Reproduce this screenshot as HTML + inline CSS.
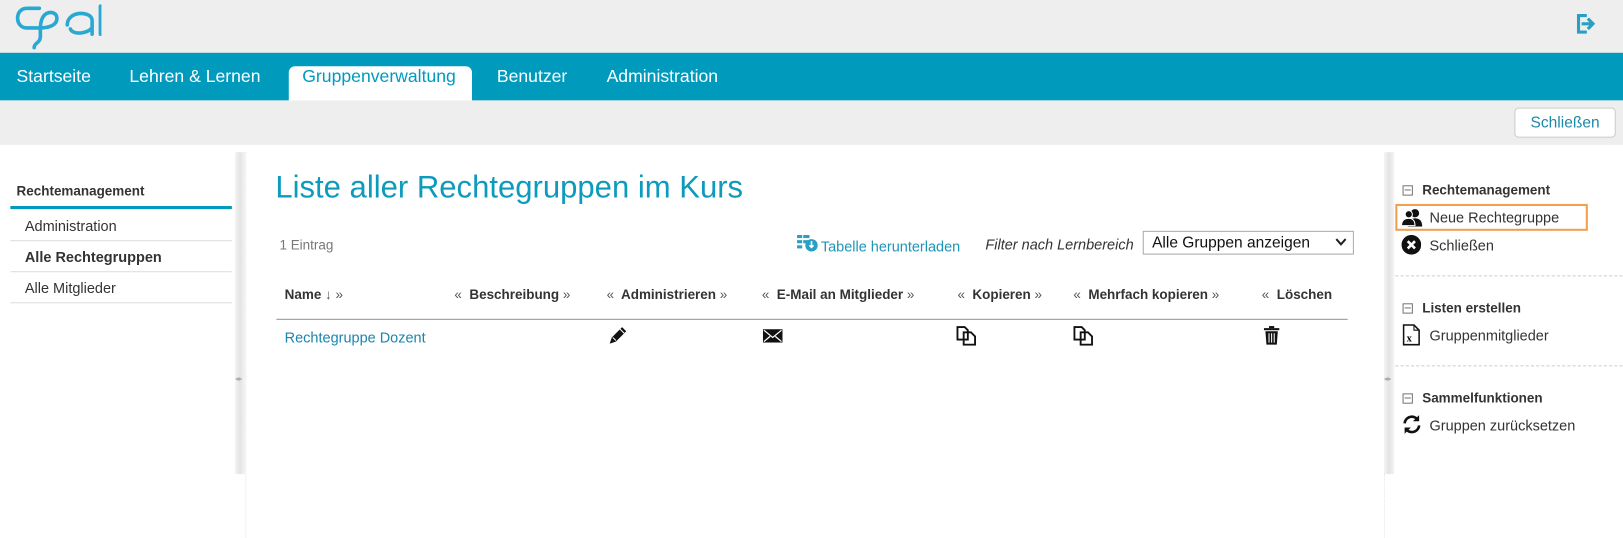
<!DOCTYPE html>
<html><head><meta charset="utf-8"><style>
*{margin:0;padding:0;box-sizing:border-box}
body{width:1623px;height:520px;overflow:hidden;background:#fff;font-family:"Liberation Sans",Arial,sans-serif;font-size:14px;color:#333;position:relative}
#w{position:absolute;left:0;top:0;width:1570px;height:504px;transform:scale(1.0351);transform-origin:0 0}
.a{position:absolute;white-space:nowrap}
.hdr{left:0;top:0;width:1570px;height:51px;background:#eee}
.nav{left:0;top:51px;width:1570px;height:46px;background:#009abd}
.nav .a{color:#fff;font-size:17px;top:13px}
.tab{left:279px;top:5px;width:177px;height:41px;background:#fff;border-radius:6px 6px 0 0}
.bar{left:0;top:97px;width:1570px;height:43px;background:#eee}
.btn{left:1463px;top:104px;width:98px;height:29px;background:#fff;border:1px solid #ccc;border-radius:4px;color:#1e88a8;font-size:15px;text-align:center;line-height:27px}
.strip{width:10px;top:147px;height:311px;background:linear-gradient(90deg,#f4f4f4,#e4e4e4,#f4f4f4)}
.li{left:10px;width:214px;height:30px;border-bottom:1px solid #ddd;padding-left:14px;line-height:30px;font-size:14px}
.h{font-size:13px;font-weight:bold;color:#333;top:277px}
.h i{font-style:normal;font-weight:normal;color:#555}
.rh{font-size:13px;font-weight:bold;left:1374px}
.box{width:10px;height:10px;border:1px solid #777;left:1355px}
.box:after{content:"";position:absolute;left:1px;top:3px;width:6px;height:1px;background:#777}
.ri{left:1381px;font-size:14px}
.dash{left:1348px;width:275px;border-top:1px dashed #ccc}
</style></head><body><div id="w">
<div class="a hdr"></div>
<svg class="a" style="left:8px;top:2px" width="90" height="46" viewBox="0 0 90 46"><g fill="none" stroke="#29a8d4" stroke-width="3.5" stroke-linecap="round"><path d="M30 6 H18 C6 6 6 25 18 25 H30 C40 25 47 22 47 16 C47 10 41 9 37 11 C32 14 31 20 31 27 V33 C31 40 25 39 25 44"/><path d="M57 22 C57 8 81 8 81 18 V31 M81 24 C78 31 62 32 60 26"/><path d="M89 4 V31"/></g></svg>
<svg class="a" style="left:1522px;top:13px" width="21" height="20" viewBox="0 0 21 20"><path d="M11 2H3v16h8" fill="none" stroke="#2a9fc4" stroke-width="3"/><path d="M6 10h9M12 5l5 5-5 5" fill="none" stroke="#2a9fc4" stroke-width="3"/></svg>
<div class="a nav">
<div class="a" style="left:16px">Startseite</div>
<div class="a" style="left:125px">Lehren &amp; Lernen</div>
<div class="a tab"></div>
<div class="a" style="left:292px;color:#009abd">Gruppenverwaltung</div>
<div class="a" style="left:480px">Benutzer</div>
<div class="a" style="left:586px">Administration</div>
</div>
<div class="a bar"></div>
<div class="a btn">Schließen</div>

<div class="a" style="left:16px;top:177px;font-weight:bold;font-size:13px">Rechtemanagement</div>
<div class="a" style="left:10px;top:199px;width:214px;height:3px;background:#009abd"></div>
<div class="a li" style="top:203px">Administration</div>
<div class="a li" style="top:233px;font-weight:bold">Alle Rechtegruppen</div>
<div class="a li" style="top:263px">Alle Mitglieder</div>

<div class="a strip" style="left:227px"></div>
<div class="a" style="left:237px;top:147px;height:373px;border-left:1px dotted #e6e6e6"></div>
<div class="a strip" style="left:1337px"></div>
<div class="a" style="left:1337px;top:458px;height:62px;border-left:1px dotted #e6e6e6"></div>
<div class="a" style="left:227px;top:362px;font-size:7px;color:#aaa">◂▸</div>
<div class="a" style="left:1337px;top:362px;font-size:7px;color:#aaa">◂▸</div>

<div class="a" style="left:266px;top:165px;font-size:30px;color:#0d9bbd">Liste aller Rechtegruppen im Kurs</div>
<div class="a" style="left:270px;top:229px;font-size:13px;color:#777">1 Eintrag</div>
<svg class="a" style="left:770px;top:227px" width="20" height="16" viewBox="0 0 20 16"><g fill="#2a9fc4"><rect x="0" y="0" width="5" height="3"/><rect x="6" y="0" width="6" height="3"/><rect x="0" y="5" width="5" height="3"/><rect x="0" y="10" width="5" height="3"/><rect x="6" y="5" width="5" height="3"/><circle cx="14" cy="10" r="6"/></g><path d="M14 6v6M12 10l2 2 2-2" stroke="#fff" stroke-width="1.5" fill="none"/></svg>
<div class="a" style="left:793px;top:230px;color:#1e95b8">Tabelle herunterladen</div>
<div class="a" style="left:952px;top:228px;font-style:italic">Filter nach Lernbereich</div>
<div class="a" style="left:1104px;top:223px;width:204px;height:23px;border:1px solid #aaa;font-size:15px;padding:2px 8px;color:#111">Alle Gruppen anzeigen<svg style="position:absolute;right:6px;top:6px" width="11" height="8" viewBox="0 0 11 8"><path d="M1 1l4.5 5L10 1" stroke="#222" stroke-width="2" fill="none"/></svg></div>

<div class="a h" style="left:275px">Name <i>↓ »</i></div>
<div class="a h" style="left:439px"><i>«</i>&nbsp; Beschreibung <i>»</i></div>
<div class="a h" style="left:586px"><i>«</i>&nbsp; Administrieren <i>»</i></div>
<div class="a h" style="left:736px"><i>«</i>&nbsp; E-Mail an Mitglieder <i>»</i></div>
<div class="a h" style="left:925px"><i>«</i>&nbsp; Kopieren <i>»</i></div>
<div class="a h" style="left:1037px"><i>«</i>&nbsp; Mehrfach kopieren <i>»</i></div>
<div class="a h" style="left:1219px"><i>«</i>&nbsp; Löschen</div>
<div class="a" style="left:267px;top:308px;width:1035px;height:1px;background:#8a96a8"></div>
<div class="a" style="left:275px;top:318px;color:#1a86ad">Rechtegruppe Dozent</div>
<svg class="a" style="left:587px;top:314px" width="20" height="20" viewBox="0 0 20 20"><path d="M2 18l2-6 10-10 4 4-10 10z" fill="#111"/><path d="M5 12l3 3M12 4l4 4" stroke="#fff" stroke-width="1"/></svg>
<svg class="a" style="left:737px;top:318px" width="19" height="13" viewBox="0 0 19 13"><rect width="19" height="13" fill="#111"/><path d="M1 1l8.5 7L18 1M1 12l6-5M18 12l-6-5" stroke="#fff" stroke-width="1.2" fill="none"/></svg>
<svg class="a" style="left:924px;top:315px" width="20" height="19" viewBox="0 0 20 19"><path d="M1 1h7l3 3v9H1z M7 6h7l4 4v8H7z" fill="#fff" stroke="#111" stroke-width="1.8"/></svg>
<svg class="a" style="left:1037px;top:315px" width="20" height="19" viewBox="0 0 20 19"><path d="M1 1h7l3 3v9H1z M7 6h7l4 4v8H7z" fill="#fff" stroke="#111" stroke-width="1.8"/></svg>
<svg class="a" style="left:1221px;top:315px" width="15" height="18" viewBox="0 0 15 18"><rect x="0" y="2" width="15" height="2" fill="#111"/><rect x="5" y="0" width="5" height="2" fill="#111"/><path d="M1.5 5h12l-1 13h-10z" fill="#111"/><path d="M5 7v9M7.5 7v9M10 7v9" stroke="#fff" stroke-width="1"/></svg>

<div class="a box" style="top:179px"></div>
<div class="a rh" style="top:176px">Rechtemanagement</div>
<div class="a" style="left:1348px;top:197px;width:186px;height:26px;border:2px solid #f0a050"></div>
<svg class="a" style="left:1354px;top:201px" width="22" height="18" viewBox="0 0 22 18"><circle cx="13" cy="5" r="4" fill="#111"/><path d="M6 18c0-6 3-8 7-8s7 2 7 8z" fill="#111"/><circle cx="7" cy="6" r="3.5" fill="#111" stroke="#fff"/><path d="M0 17c0-5 3-7 7-7s6 2 6 7z" fill="#111" stroke="#fff"/></svg>
<div class="a ri" style="top:202px">Neue Rechtegruppe</div>
<svg class="a" style="left:1354px;top:227px" width="19" height="19" viewBox="0 0 19 19"><circle cx="9.5" cy="9.5" r="9.5" fill="#111"/><path d="M6 6l7 7M13 6l-7 7" stroke="#fff" stroke-width="2.5"/></svg>
<div class="a ri" style="top:229px">Schließen</div>
<div class="a dash" style="top:266px"></div>
<div class="a box" style="top:293px"></div>
<div class="a rh" style="top:290px">Listen erstellen</div>
<svg class="a" style="left:1355px;top:313px" width="17" height="21" viewBox="0 0 17 21"><path d="M1 1h10l5 5v14H1z" fill="#fff" stroke="#111" stroke-width="1.5"/><path d="M11 1v5h5" fill="none" stroke="#111"/><text x="4" y="17" font-size="10" font-weight="bold" font-family="Liberation Serif">x</text></svg>
<div class="a ri" style="top:316px">Gruppenmitglieder</div>
<div class="a dash" style="top:353px"></div>
<div class="a box" style="top:380px"></div>
<div class="a rh" style="top:377px">Sammelfunktionen</div>
<svg class="a" style="left:1354px;top:400px" width="20" height="20" viewBox="0 0 20 20"><path d="M3 9a7 7 0 0 1 13-3M17 11a7 7 0 0 1-13 3" fill="none" stroke="#111" stroke-width="2.5"/><path d="M17 1v6h-6zM3 19v-6h6z" fill="#111"/></svg>
<div class="a ri" style="top:403px">Gruppen zurücksetzen</div>
</div></body></html>
